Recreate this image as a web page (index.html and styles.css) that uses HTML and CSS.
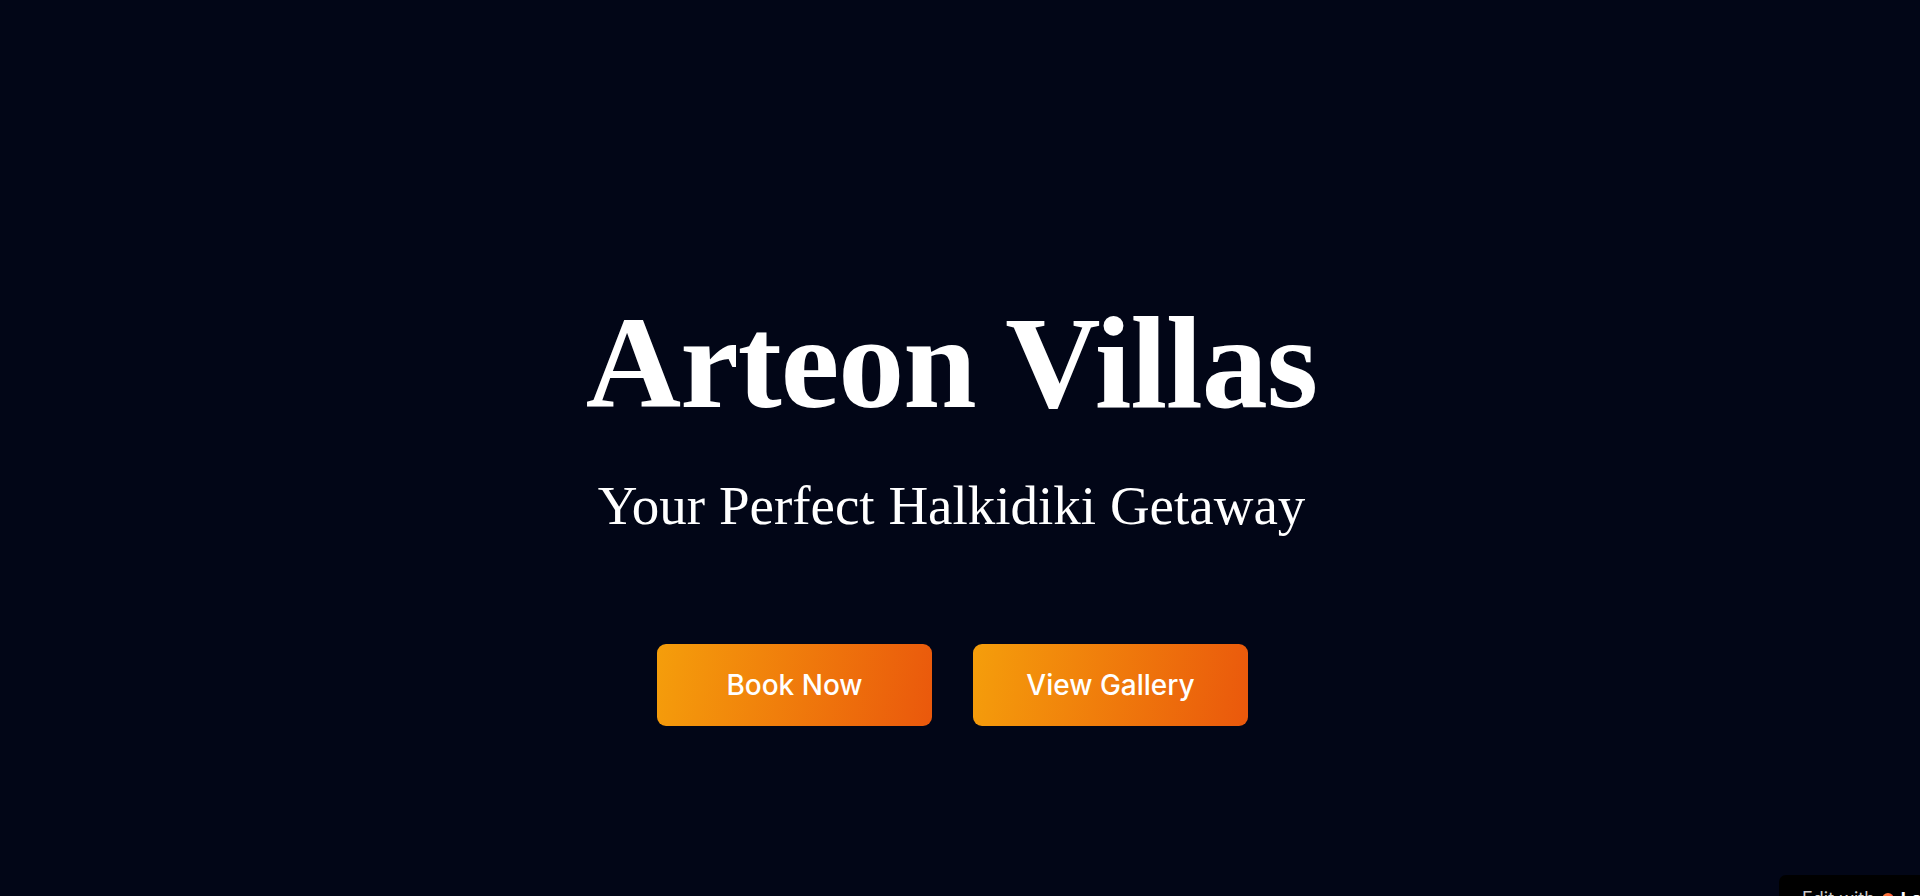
FILE: index.html
```html
<!DOCTYPE html>
<html lang="en">
<head>
<meta charset="utf-8">
<title>Arteon Villas</title>
<link rel="stylesheet" href="styles.css">
</head>
<body>
<main class="hero">
  <h1 class="hero-title">Arteon Villas</h1>
  <p class="hero-subtitle">Your Perfect Halkidiki Getaway</p>
  <div class="hero-actions">
    <a class="btn" href="#">Book Now</a>
    <a class="btn" href="#">View Gallery</a>
  </div>
</main>
<a class="edit-badge" href="#">
  <span class="edit-text">Edit with</span>
  <svg class="edit-logo" width="12" height="12" viewBox="0 0 12 12" aria-hidden="true">
    <defs>
      <linearGradient id="lg" x1="0" y1="0" x2="1" y2="1">
        <stop offset="0" stop-color="#ff8a3d"/>
        <stop offset="1" stop-color="#ff2e2e"/>
      </linearGradient>
    </defs>
    <circle cx="6" cy="6" r="6" fill="url(#lg)"/>
  </svg>
  <span class="edit-brand">Lovable</span>
</a>
</body>
</html>
```

FILE: styles.css
```css
* { box-sizing: border-box; }
html, body {
  margin: 0;
  padding: 0;
  background: #020617;
  height: 100%;
  overflow: hidden;
}
body {
  font-family: Inter, "Liberation Sans", sans-serif;
  color: #fff;
}
.hero {
  display: flex;
  flex-direction: column;
  align-items: center;
  padding-top: 297px;
  padding-right: 17px;
}
.hero-title {
  margin: 0;
  font-family: "Liberation Serif", "Times New Roman", serif;
  font-weight: 700;
  font-size: 132px;
  line-height: 1;
  letter-spacing: -1px;
  color: #fff;
}
.hero-subtitle {
  margin: 44px 0 0;
  font-family: "Liberation Serif", "Times New Roman", serif;
  font-weight: 400;
  font-size: 55px;
  line-height: 66px;
  color: #fff;
}
.hero-actions {
  display: flex;
  gap: 41px;
  margin-top: 105px;
  padding-left: 2px;
}
.btn {
  display: flex;
  align-items: center;
  justify-content: center;
  width: 275px;
  height: 82px;
  border-radius: 9px;
  background: linear-gradient(100deg, #f59e0b 0%, #ea580c 100%);
  color: #fff;
  text-decoration: none;
  font-family: Inter, "Liberation Sans", sans-serif;
  font-weight: 500;
  font-size: 28px;
}
.edit-badge {
  position: fixed;
  left: 1779px;
  top: 875px;
  width: 200px;
  height: 40px;
  display: flex;
  align-items: flex-start;
  gap: 7px;
  padding: 14px 0 0 23px;
  background: #000;
  border-radius: 7px;
  text-decoration: none;
  font-family: Inter, "Liberation Sans", sans-serif;
  font-size: 18px;
  line-height: 20px;
  white-space: nowrap;
}
.edit-text { color: #c9c9c9; flex: none; }
.edit-logo { margin-top: 4px; flex: none; }
.edit-brand { color: #fff; font-weight: 700; flex: none; }
```
